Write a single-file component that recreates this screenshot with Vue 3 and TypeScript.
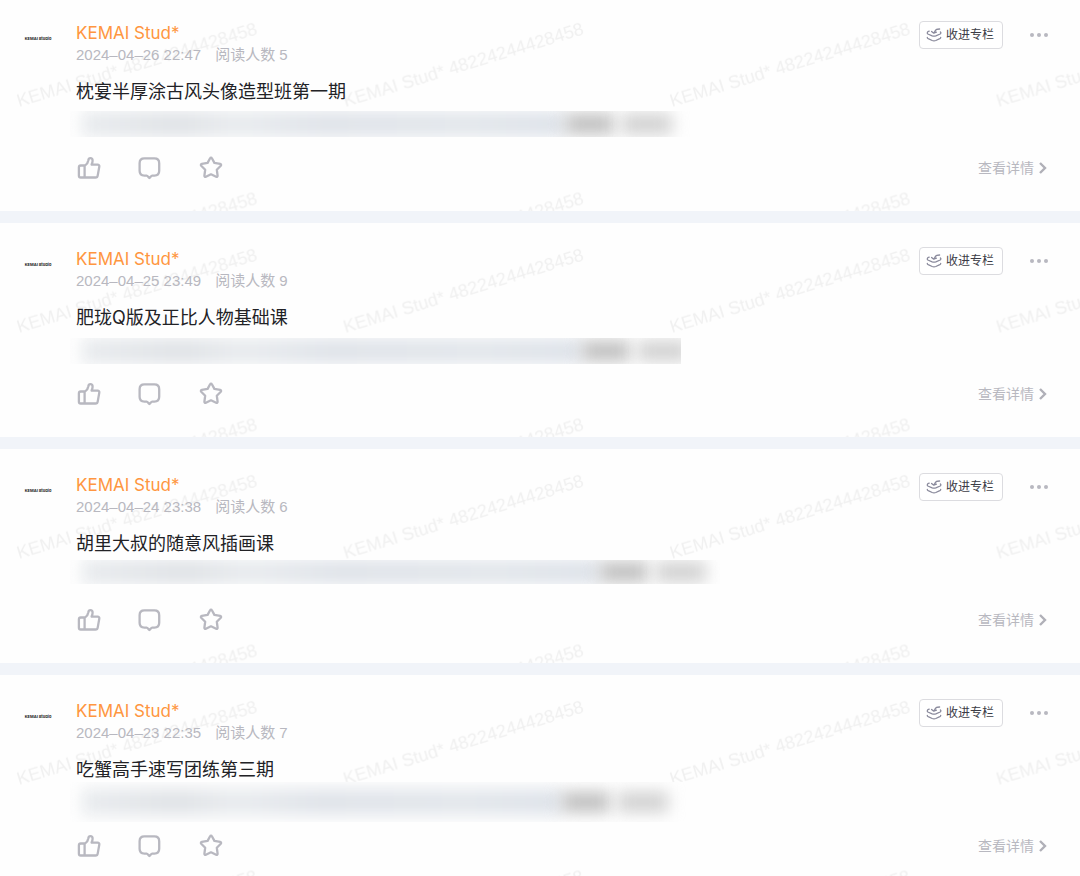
<script setup lang="ts">
interface Post {
  id: number
  author: string
  time: string
  reads: number
  title: string
  veil: string
}

const posts: Post[] = [
  { id: 1, author: 'KEMAI Stud*', time: '2024–04–26 22:47', reads: 5, title: '枕宴半厚涂古风头像造型班第一期', veil: 'veil-a' },
  { id: 2, author: 'KEMAI Stud*', time: '2024–04–25 23:49', reads: 9, title: '肥珑Q版及正比人物基础课', veil: 'veil-b' },
  { id: 3, author: 'KEMAI Stud*', time: '2024–04–24 23:38', reads: 6, title: '胡里大叔的随意风插画课', veil: 'veil-c' },
  { id: 4, author: 'KEMAI Stud*', time: '2024–04–23 22:35', reads: 7, title: '吃蟹高手速写团练第三期', veil: 'veil-d' },
]
</script>

<template>
  <main class="feed">
    <article v-for="post in posts" :key="post.id" class="card">
      <svg class="watermark" aria-hidden="true">
        <defs>
          <pattern :id="`mark-${post.id}`" width="326.5" height="169.5" patternUnits="userSpaceOnUse">
            <text class="mark-text" transform="translate(19 110) rotate(-17)">KEMAI Stud* 48224244428458</text>
          </pattern>
        </defs>
        <rect width="100%" height="100%" :fill="`url(#mark-${post.id})`" />
      </svg>

      <div class="avatar">KEMAI Studio</div>

      <div class="body">
        <header class="head">
          <div class="who">
            <a class="author" href="#">{{ post.author }}</a>
            <div class="meta">
              <time>{{ post.time }}</time>
              <span>阅读人数 {{ post.reads }}</span>
            </div>
          </div>
          <div class="tools">
            <button class="collect" type="button">
              <svg viewBox="0 0 16 16" width="16" height="16" aria-hidden="true">
                <path d="M3.2 4.200C1.200 4.600.8 6.200 1.800 7l4.400 1.800c1.200.4 2.400.4 3.600 0L14.200 7c.8-.6.9-1.400.2-2" />
                <path d="M1.300 10.400c0 .6.300 1 .9 1.300l4 1.800c1.200.5 2.400.5 3.600 0l4-1.800c.6-.3.9-.7.900-1.300" />
                <path d="M5.600 4.400l2.200 1.800 2.600-1M8 6c.2-1.200 1-1.400 1.400-2.400.4-1.200 1.600-1.600 4.200-1.600" />
              </svg>
              <span>收进专栏</span>
            </button>
            <button class="more" type="button" aria-label="更多"><i></i><i></i><i></i></button>
          </div>
        </header>

        <h2 class="title">{{ post.title }}</h2>

        <div class="veil" :class="post.veil" aria-hidden="true">
          <span class="haze"></span><span class="shade"></span><span class="shade small"></span>
        </div>

        <footer class="foot">
          <div class="actions">
            <button type="button" aria-label="点赞">
              <svg viewBox="0 0 24 24" width="24" height="24">
                <path d="M8 9.500c1.800-1 2.900-2.600 3.300-5 .2-1.500.9-2.300 2.100-2.300 1.400 0 2.200 1 2.200 2.500 0 1.400-.4 2.600-1 3.900h6c1.200 0 1.900.9 1.700 2l-1.600 9c-.2 1.200-1 1.900-2.200 1.900H3.700c-1.100 0-1.800-.7-1.800-1.800v-8.400c0-1.100.7-1.800 1.800-1.800zM7.600 9.500v12" />
              </svg>
            </button>
            <button type="button" aria-label="评论">
              <svg viewBox="0 0 24 24" width="24" height="24">
                <path d="M6.400 2.400h10c3.200 0 4.800 1.600 4.800 4.800v7.600c0 3.200-1.600 4.800-4.800 4.800h-2.200c-1 0-1.700 1.400-2.800 2.400-1.100-1-1.800-2.400-2.800-2.400H6.400c-3.200 0-4.800-1.600-4.800-4.800V7.200c0-3.200 1.600-4.800 4.800-4.800z" />
              </svg>
            </button>
            <button type="button" aria-label="收藏">
              <svg viewBox="0 0 24 24" width="24" height="24">
                <path d="M11.100 2.200c.4-.8 1.400-.8 1.800 0l2.500 4.700 5.800 1c.9.200 1.200 1.100.6 1.800l-4 4 .8 6c.1.900-.7 1.400-1.500 1L12 18.300l-5.100 2.400c-.8.4-1.600-.1-1.500-1l.8-6-4-4c-.6-.7-.3-1.600.6-1.800l5.800-1z" />
              </svg>
            </button>
          </div>
          <a class="detail" href="#">
            <span>查看详情</span>
            <svg viewBox="0 0 10 14" width="10" height="14" aria-hidden="true"><path d="M2 2l5 5-5 5" /></svg>
          </a>
        </footer>
      </div>
    </article>
  </main>
</template>

<style>
body {
  margin: 0;
  overflow: hidden;
  background: #f1f4f9;
}
</style>

<style scoped>
.feed {
  display: flex;
  flex-direction: column;
  gap: 12px;
  margin-top: -3px;
  font-family: Inter, "Noto Sans CJK SC", sans-serif;
}

.card {
  position: relative;
  display: flex;
  gap: 20px;
  box-sizing: border-box;
  padding: 24px 32px 31px 20px;
  background: #fefefe;
}

.watermark {
  position: absolute;
  inset: 0;
  width: 100%;
  height: 100%;
  pointer-events: none;
}

.mark-text {
  font-family: "Liberation Sans", Arial, sans-serif;
  font-size: 18px;
  fill: #f0f0f0;
}

.avatar {
  flex: none;
  width: 36px;
  height: 36px;
  font-size: 4px;
  font-weight: 700;
  line-height: 36px;
  text-align: center;
  white-space: nowrap;
  color: #222;
}

.body {
  position: relative;
  flex: 1;
  min-width: 0;
}

.head,
.foot,
.tools,
.actions,
.detail {
  display: flex;
  align-items: center;
}

.head,
.foot {
  justify-content: space-between;
}

.author {
  display: block;
  font-size: 17px;
  line-height: 24px;
  color: #ff9640;
  text-decoration: none;
}

.meta {
  display: flex;
  gap: 14px;
  font-family: "Liberation Sans", "Noto Sans CJK SC", sans-serif;
  font-size: 15px;
  line-height: 20px;
  color: #b8b8c0;
}

button {
  padding: 0;
  border: 0;
  background: none;
  font-family: inherit;
}

.tools {
  align-self: flex-start;
  gap: 27px;
}

.collect {
  display: flex;
  align-items: center;
  gap: 4px;
  box-sizing: border-box;
  height: 28px;
  padding: 0 8px 0 6px;
  border: 1px solid #dcdce0;
  border-radius: 4px;
  background: #fff;
  font-size: 12px;
  line-height: 18px;
  color: #3c3c46;
}

.collect svg {
  fill: none;
  stroke: #8a8a9c;
  stroke-width: 1.3;
  stroke-linecap: round;
  stroke-linejoin: round;
}

.more {
  display: flex;
  gap: 3px;
}

.more i {
  width: 4px;
  height: 4px;
  border-radius: 50%;
  background: #b8b8c0;
}

.title {
  margin: 13px 0 0;
  font-size: 18px;
  font-weight: 400;
  line-height: 28px;
  color: #222226;
}

.veil {
  display: flex;
  align-items: center;
  width: 620px;
  max-width: 100%;
  margin-left: -6px;
  overflow: hidden;
  background: #fefefe;
}

.veil-a {
  height: 26px;
  margin-top: 5px;
  margin-bottom: 19px;
}

.veil-b {
  width: 611px;
  height: 26px;
  margin-top: 6px;
  margin-bottom: 18px;
}

.veil-c {
  width: 650px;
  height: 24px;
  margin-top: 2px;
  margin-bottom: 24px;
}

.veil-d {
  height: 40px;
  margin-top: -2px;
  margin-bottom: 12px;
}

.haze {
  flex: none;
  width: 484px;
  height: 26px;
  margin-left: 12px;
  background: linear-gradient(90deg, #e8ebee, #dfe2e6 20%, #e8ebee 32%, #dfe3e9 50%, #e2e6eb 80%, #dde2e9);
  filter: blur(8px);
}

.veil-b .haze {
  width: 500px;
}

.veil-c .haze {
  width: 518px;
}

.veil-d .haze {
  width: 480px;
}

.shade {
  flex: none;
  width: 48px;
  height: 20px;
  background: #bebebe;
  filter: blur(8px);
}

.shade.small {
  width: 50px;
  margin-left: 8px;
  background: #d0d0d0;
}

.actions {
  gap: 37px;
  margin-left: 1px;
}

.actions button {
  display: flex;
}

.actions svg {
  fill: none;
  stroke: #b8b8c0;
  stroke-width: 2.3;
  stroke-linejoin: round;
}

.detail {
  gap: 4px;
  font-size: 14px;
  line-height: 20px;
  color: #b8b8c0;
  text-decoration: none;
}

.detail svg {
  fill: none;
  stroke: #b0b0b8;
  stroke-width: 2.4;
}
</style>
